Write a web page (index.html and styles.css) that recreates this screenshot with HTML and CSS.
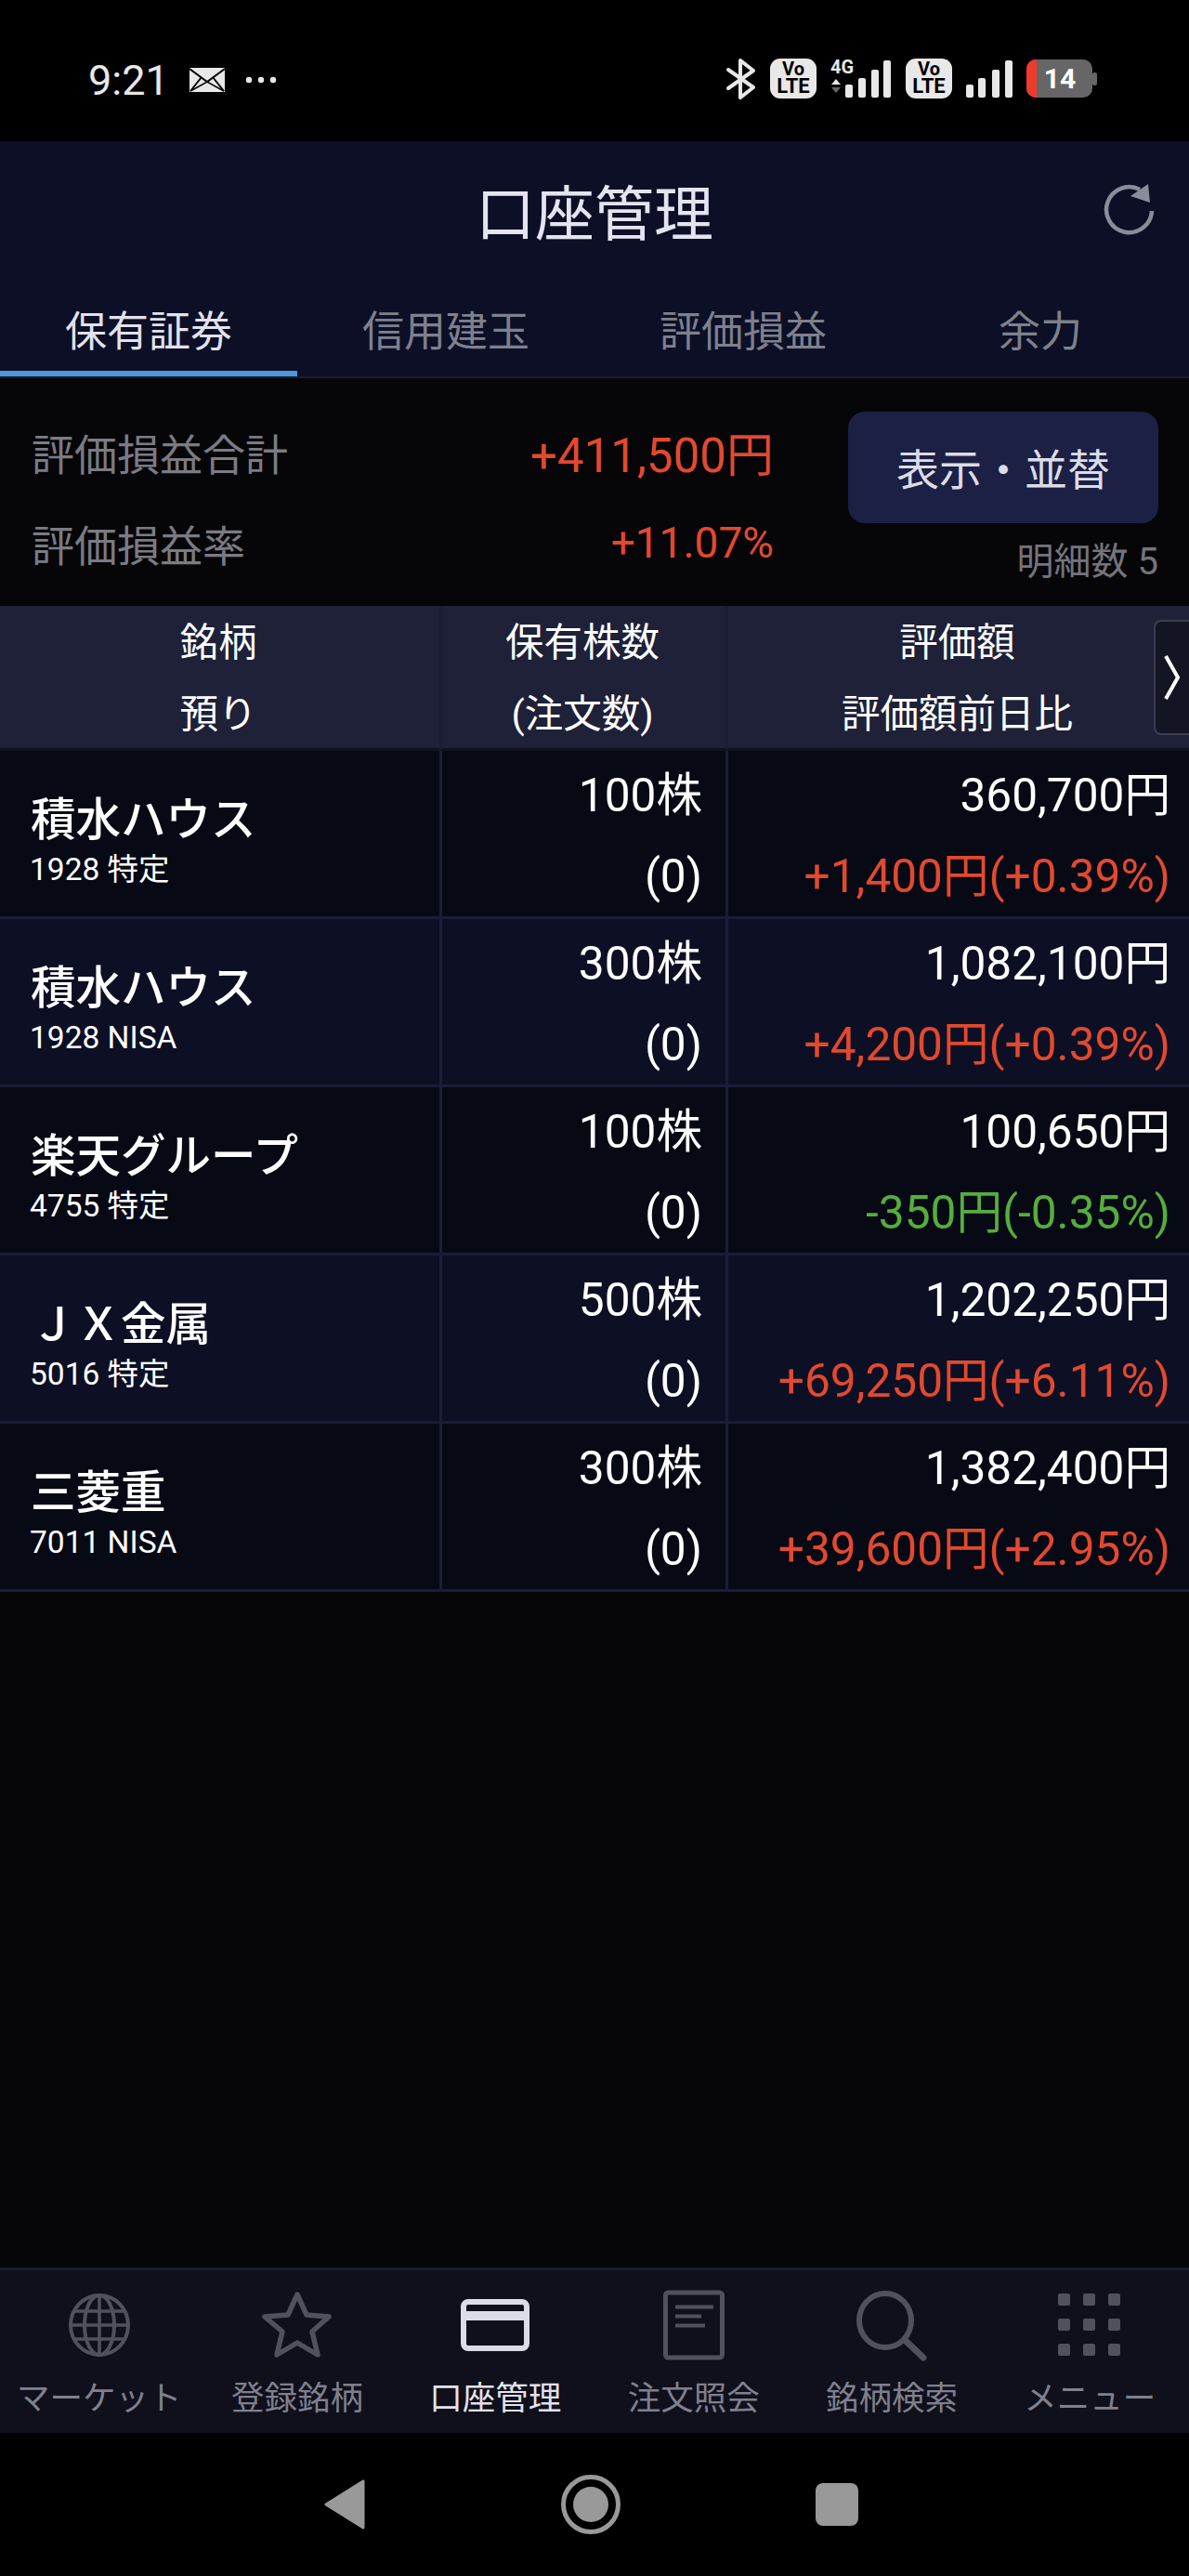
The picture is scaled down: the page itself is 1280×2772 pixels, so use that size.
FILE: index.html
```html
<!DOCTYPE html>
<html lang="ja">
<head>
  <meta charset="UTF-8">
  <meta name="viewport" content="width=device-width, initial-scale=1.0">
  <title>口座管理</title>
  <link rel="stylesheet" href="styles.css">
</head>
<body>
  <div class="phone">
    <div class="status">
      <div class="status-left">
        <span class="clock">9:21</span>
        <svg class="ic-mail" width="38" height="26" viewBox="0 0 38 26"><rect width="38" height="26" fill="#e8e8e8"/><path d="M0 1 19 15 38 1M1 25 13 10M37 25 25 10" fill="none" stroke="#000" stroke-width="2"/><path d="M1 25 19 15 37 25" fill="none" stroke="#000" stroke-width="1.5"/></svg>
        <svg class="ic-dots" width="34" height="8" viewBox="0 0 34 8"><circle cx="4" cy="4" r="3.2" fill="#e8e8e8"/><circle cx="17" cy="4" r="3.2" fill="#e8e8e8"/><circle cx="30" cy="4" r="3.2" fill="#e8e8e8"/></svg>
      </div>
      <div class="status-right">
        <svg width="32" height="46" viewBox="0 0 32 46"><path d="M2 13 29 32 15 43V3L29 14 2 33" fill="none" stroke="#e8e8e8" stroke-width="4" stroke-linejoin="round" stroke-linecap="round"/></svg>
        <svg width="50" height="43" viewBox="0 0 50 43"><rect width="50" height="43" rx="11" fill="#e8e8e8"/><text x="25" y="18" class="volte vo">Vo</text><text x="25" y="37" class="volte">LTE</text></svg>
        <svg width="66" height="41" viewBox="0 0 66 41"><text x="0" y="15" class="four-g">4G</text><path d="M6 21 11 27H1Z" fill="#e8e8e8"/><path d="M1 30H11L6 36Z" fill="#666"/><rect x="16" y="27" width="8" height="14" rx="2" fill="#e8e8e8"/><rect x="30" y="20" width="8" height="21" rx="2" fill="#e8e8e8"/><rect x="44" y="11" width="8" height="30" rx="2" fill="#e8e8e8"/><rect x="57" y="1" width="8" height="40" rx="2" fill="#e8e8e8"/></svg>
        <svg width="50" height="43" viewBox="0 0 50 43"><rect width="50" height="43" rx="11" fill="#e8e8e8"/><text x="25" y="18" class="volte vo">Vo</text><text x="25" y="37" class="volte">LTE</text></svg>
        <svg width="50" height="40" viewBox="0 0 50 40"><rect y="26" width="8" height="14" rx="2" fill="#e8e8e8"/><rect x="13" y="19" width="8" height="21" rx="2" fill="#e8e8e8"/><rect x="28" y="10" width="8" height="30" rx="2" fill="#e8e8e8"/><rect x="42" y="0" width="8" height="40" rx="2" fill="#e8e8e8"/></svg>
        <svg width="76" height="41" viewBox="0 0 76 41"><rect x="71" y="14" width="5" height="14" rx="2" fill="#666"/><rect width="71" height="41" rx="10" fill="#666"/><path d="M10 0H11V41H10A10 10 0 0 1 0 31V10A10 10 0 0 1 10 0Z" fill="#f03a2c"/><text x="36" y="31" class="batt">14</text></svg>
      </div>
    </div>

    <header class="head">
      <div class="title-row">
        <span></span>
        <h1>口座管理</h1>
        <svg class="reload" width="54" height="56" viewBox="0 0 54 56"><path d="M39 7A24.5 24.5 0 1 0 52 30" fill="none" stroke="#8b8c99" stroke-width="4.5"/><path d="M29 14 50 21 48 1Z" fill="#8b8c99"/></svg>
      </div>
      <nav class="tabs">
        <div class="tab active">保有証券</div>
        <div class="tab">信用建玉</div>
        <div class="tab">評価損益</div>
        <div class="tab">余力</div>
      </nav>
    </header>

    <section class="summary">
      <div class="totals">
        <div class="total-row"><span class="total-label">評価損益合計</span><span class="total-yen up">+411,500円</span></div>
        <div class="total-row"><span class="total-label">評価損益率</span><span class="total-pct up">+11.07%</span></div>
      </div>
      <div class="actions">
        <button class="sort-btn">表示・並替</button>
        <div class="count">明細数 5</div>
      </div>
    </section>

    <section class="table">
      <div class="table-head">
        <div class="hcell"><span>銘柄</span><span>預り</span></div>
        <div class="hcell"><span>保有株数</span><span>(注文数)</span></div>
        <div class="hcell last"><span>評価額</span><span>評価額前日比</span></div>
        <div class="more"><svg width="20" height="50" viewBox="0 0 20 50"><path d="M3 2 16 25 3 48" fill="none" stroke="#fff" stroke-width="4"/></svg></div>
      </div>

      <div class="row">
        <div class="cell name"><div class="stock">積水ハウス</div><div class="code">1928 特定</div></div>
        <div class="cell num"><span>100株</span><span>(0)</span></div>
        <div class="cell num last"><span>360,700円</span><span class="up">+1,400円(+0.39%)</span></div>
      </div>
      <div class="row">
        <div class="cell name"><div class="stock">積水ハウス</div><div class="code">1928 NISA</div></div>
        <div class="cell num"><span>300株</span><span>(0)</span></div>
        <div class="cell num last"><span>1,082,100円</span><span class="up">+4,200円(+0.39%)</span></div>
      </div>
      <div class="row">
        <div class="cell name"><div class="stock">楽天グループ</div><div class="code">4755 特定</div></div>
        <div class="cell num"><span>100株</span><span>(0)</span></div>
        <div class="cell num last"><span>100,650円</span><span class="down">-350円(-0.35%)</span></div>
      </div>
      <div class="row">
        <div class="cell name"><div class="stock">ＪＸ金属</div><div class="code">5016 特定</div></div>
        <div class="cell num"><span>500株</span><span>(0)</span></div>
        <div class="cell num last"><span>1,202,250円</span><span class="up">+69,250円(+6.11%)</span></div>
      </div>
      <div class="row">
        <div class="cell name"><div class="stock">三菱重</div><div class="code">7011 NISA</div></div>
        <div class="cell num"><span>300株</span><span>(0)</span></div>
        <div class="cell num last"><span>1,382,400円</span><span class="up">+39,600円(+2.95%)</span></div>
      </div>
    </section>

    <div class="filler"></div>

    <nav class="bottom">
      <div class="bottom-item">
        <svg width="70" height="70" viewBox="0 0 70 70" fill="none" stroke="#50515e" stroke-width="4"><ellipse cx="35" cy="35" rx="31" ry="32"/><ellipse cx="35" cy="35" rx="16" ry="32"/><path d="M35 3V67M4 35H66M9 20H61M9 50H61" stroke-width="3.5"/></svg>
        <span>マーケット</span>
      </div>
      <div class="bottom-item">
        <svg width="78" height="74" viewBox="0 0 78 74" fill="none" stroke="#50515e" stroke-width="5.5" stroke-linejoin="round"><path d="M39 4 49 26 73 28 55 44 61 69 39 56 17 69 23 44 4 28 29 26Z"/></svg>
        <span>登録銘柄</span>
      </div>
      <div class="bottom-item on">
        <svg width="74" height="56" viewBox="0 0 74 56" fill="none" stroke="#dcdce8" stroke-width="6"><rect x="3" y="3" width="68" height="50" rx="5"/><path d="M3 18H71" stroke-width="10"/></svg>
        <span>口座管理</span>
      </div>
      <div class="bottom-item">
        <svg width="66" height="75" viewBox="0 0 66 75" fill="none" stroke="#50515e" stroke-width="5"><rect x="2.500" y="2.500" width="61" height="70" rx="3"/><path d="M13 18H54M13 28H41M13 38H45" stroke-width="4"/></svg>
        <span>注文照会</span>
      </div>
      <div class="bottom-item">
        <svg width="76" height="76" viewBox="0 0 76 76" fill="none" stroke="#50515e" stroke-width="6"><ellipse cx="31" cy="33" rx="28" ry="29"/><path d="M52 54 72 73" stroke-width="7" stroke-linecap="round"/></svg>
        <span>銘柄検索</span>
      </div>
      <div class="bottom-item">
        <svg width="68" height="68" viewBox="0 0 68 68" fill="#50515e"><rect width="13" height="13" rx="2"/><rect x="27" width="13" height="13" rx="2"/><rect x="54" width="13" height="13" rx="2"/><rect y="27" width="13" height="13" rx="2"/><rect x="27" y="27" width="13" height="13" rx="2"/><rect x="54" y="27" width="13" height="13" rx="2"/><rect y="54" width="13" height="13" rx="2"/><rect x="27" y="54" width="13" height="13" rx="2"/><rect x="54" y="54" width="13" height="13" rx="2"/></svg>
        <span>メニュー</span>
      </div>
    </nav>

    <div class="android">
      <svg width="44" height="54" viewBox="0 0 44 54"><path d="M42 2V52L2 27Z" fill="#999" stroke="#999" stroke-width="3" stroke-linejoin="round"/></svg>
      <svg width="64" height="64" viewBox="0 0 64 64"><circle cx="32" cy="32" r="29.500" fill="none" stroke="#999" stroke-width="5"/><circle cx="32" cy="32" r="19" fill="#999"/></svg>
      <div class="recent"></div>
    </div>
  </div>
</body>
</html>
```

FILE: styles.css
```css
* {
  box-sizing: border-box;
}
body {
  margin: 0;
  background: #000;
  font-family: Roboto, "Noto Sans CJK JP", sans-serif;
  color: #fff;
}
.phone {
  width: 1280px;
  height: 2772px;
  display: flex;
  flex-direction: column;
}

/* status bar */
.status {
  height: 152px;
  background: #000;
  display: flex;
  justify-content: space-between;
  align-items: center;
  padding: 20px 99px 0 95px;
  flex: none;
}
.status-left {
  display: flex;
  align-items: center;
  color: #e8e8e8;
}
.clock {
  font-size: 45px;
  width: 109px;
}
.ic-dots {
  margin-left: 22px;
}
.status-right {
  display: flex;
  align-items: center;
  gap: 15px;
  margin-bottom: 3px;
}
.status-right svg {
  overflow: visible;
}
.volte {
  font: 700 22px Roboto, sans-serif;
  fill: #000;
  text-anchor: middle;
}
.volte.vo {
  font-size: 20px;
}
.four-g {
  font: 700 20px Roboto, sans-serif;
  fill: #e8e8e8;
}
.batt {
  font: 700 30px Roboto, sans-serif;
  fill: #fff;
  text-anchor: middle;
}

/* header */
.head {
  background: #0c0f26;
  flex: none;
  border-bottom: 2px solid #1a1c2e;
}
.title-row {
  height: 152px;
  padding-bottom: 7px;
  display: grid;
  grid-template-columns: 1fr auto 1fr;
  align-items: center;
}
.title-row h1 {
  margin: 0;
  font-size: 64px;
  font-weight: 400;
  color: #e4e4f0;
}
.reload {
  justify-self: end;
  margin-right: 38px;
}
.tabs {
  display: flex;
}
.tab {
  width: 320px;
  height: 101px;
  padding-top: 3px;
  border-bottom: 6px solid transparent;
  display: flex;
  align-items: center;
  justify-content: center;
  font-size: 45px;
  color: #7f808e;
}
.tab.active {
  color: #e2e2ee;
  border-bottom-color: #4d94d8;
}

/* totals */
.summary {
  height: 245px;
  background: #060608;
  display: flex;
  flex: none;
  padding: 0 33px 0 34px;
}
.totals {
  width: 799px;
  padding-top: 30px;
}
.total-row {
  height: 98px;
  display: flex;
  justify-content: space-between;
  align-items: center;
}
.total-label {
  font-size: 46px;
  color: #7b7b84;
}
.total-yen {
  font-size: 51px;
}
.total-pct {
  font-size: 46px;
}
.up {
  color: #e2492f;
}
.down {
  color: #55ae3c;
}
.actions {
  width: 334px;
  margin-left: auto;
  padding-top: 36px;
}
.sort-btn {
  width: 100%;
  height: 120px;
  padding-bottom: 3px;
  background: #1c2044;
  border: none;
  border-radius: 18px;
  font: inherit;
  font-size: 46px;
  color: #dcdce8;
}
.count {
  margin-top: 16px;
  line-height: 52px;
  font-size: 40px;
  text-align: right;
  color: #74747c;
}

/* table */
.table {
  position: relative;
  flex: none;
}
.table-head,
.row {
  display: grid;
  grid-template-columns: 476px 308px 1fr;
}
.table-head {
  height: 156px;
  background: #1e2138;
  border-bottom: 3px solid #10121f;
}
.hcell {
  display: flex;
  flex-direction: column;
  align-items: center;
  padding: 1px 3px 0 0;
  border-right: 3px solid #1a1d33;
  font-size: 41.500px;
  line-height: 77px;
}
.last {
  border-right: none;
}
.more {
  position: absolute;
  top: 15px;
  right: 0;
  width: 38px;
  height: 124px;
  background: #131525;
  border: 2px solid #3a3d50;
  border-right: none;
  border-radius: 8px 0 0 8px;
  display: flex;
  align-items: center;
  justify-content: center;
}
.row {
  height: 181px;
  background: #070915;
  border-bottom: 3px solid #1a1d38;
}
.row:nth-child(odd) {
  background: #0d1024;
}
.cell {
  border-right: 3px solid #1a1d38;
}
.cell.last {
  border-right: none;
}
.name {
  padding: 27px 0 0 33px;
}
.stock {
  font-size: 48.500px;
  font-weight: 500;
  line-height: 96px;
}
.code {
  font-size: 33.500px;
  line-height: 34px;
  margin: -12px 0 0 -1px;
}
.num {
  display: flex;
  flex-direction: column;
  align-items: flex-end;
  padding: 5px 25px 0 0;
  font-size: 49.600px;
  line-height: 87px;
}
.num.last {
  padding-right: 20px;
}

.filler {
  flex: 1;
  background: #060608;
}

/* bottom nav */
.bottom {
  height: 178px;
  flex: none;
  background: #0f101b;
  border-top: 3px solid #1a1c2a;
  display: flex;
}
.bottom-item {
  flex: 1;
  display: flex;
  flex-direction: column;
  align-items: center;
  font-size: 35.500px;
  color: #7f808e;
  padding-top: 20px;
}
.bottom-item svg {
  height: 78px;
  margin-bottom: 11px;
}
.bottom-item.on {
  color: #e2e2ee;
}

/* android nav */
.android {
  height: 154px;
  flex: none;
  background: #000;
  display: flex;
  align-items: center;
  padding: 0 356px 0 349px;
  justify-content: space-between;
}
.recent {
  width: 46px;
  height: 46px;
  background: #999;
  border-radius: 8px;
}
```
